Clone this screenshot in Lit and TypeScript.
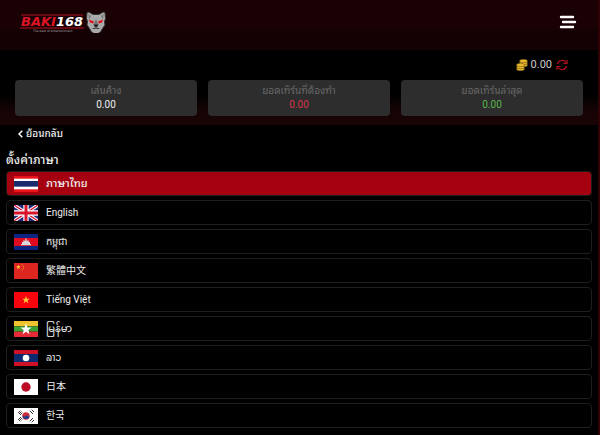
import { LitElement, html, css, svg } from "lit";
import { customElement, state } from "lit/decorators.js";
import { classMap } from "lit/directives/class-map.js";

const STAR = "M0-10 2.4-3.1 9.5-3.1 3.8 1.2 5.9 8.1 0 3.9-5.9 8.1-3.8 1.2-9.5-3.1-2.4-3.1z";

const star = (x: number, y: number, s: number, fill: string) =>
  svg`<path d=${STAR} fill=${fill} transform="translate(${x} ${y}) scale(${s})"/>`;

const flags: Record<string, unknown> = {
  th: svg`<path fill="#e8141c" d="M0 0h72v48H0z"/><path fill="#fff" d="M0 8h72v32H0z"/><path fill="#1c2a6e" d="M0 15h72v17H0z"/>`,
  en: svg`<path fill="#1a2a78" d="M0 0h72v48H0z"/><path stroke="#fff" stroke-width="10" d="M0 0l72 48M72 0L0 48"/><path stroke="#d8142c" stroke-width="4" d="M0 0l72 48M72 0L0 48"/><path stroke="#fff" stroke-width="16" d="M36 0v48M0 24h72"/><path stroke="#d8142c" stroke-width="9" d="M36 0v48M0 24h72"/>`,
  km: svg`<path fill="#0c2580" d="M0 0h72v48H0z"/><path fill="#e00a20" d="M0 12h72v24H0z"/><path fill="#d8d8d8" d="M21 34v-4h3v-6h4v-4l2-3 2 4h2v-5l2-4 2 4v5h2l2-4 2 3v4h4v6h3v4z"/>`,
  zh: svg`<path fill="#de2620" d="M0 0h72v48H0z"/>${star(13, 12, 0.7, "#ffd53a")}${star(24, 5, 0.22, "#ffd53a")}${star(28, 10, 0.22, "#ffd53a")}${star(28, 16, 0.22, "#ffd53a")}${star(24, 21, 0.22, "#ffd53a")}`,
  vi: svg`<path fill="#f7050c" d="M0 0h72v48H0z"/>${star(36, 24, 1.2, "#ffc83a")}`,
  my: svg`<path fill="#efc42e" d="M0 0h72v16H0z"/><path fill="#3ba233" d="M0 16h72v16H0z"/><path fill="#e62b36" d="M0 32h72v16H0z"/>${star(36, 25, 1.8, "#fff")}`,
  lo: svg`<path fill="#ce1126" d="M0 0h72v48H0z"/><path fill="#0c2a70" d="M0 12h72v24H0z"/><circle cx="36" cy="24" r="10" fill="#fff"/>`,
  ja: svg`<path fill="#fff" d="M0 0h72v48H0z"/><circle cx="36" cy="24" r="14" fill="#bd0a24"/>`,
  ko: svg`<path fill="#fff" d="M0 0h72v48H0z"/><circle cx="36" cy="24" r="11" fill="#cd2e3a"/><path fill="#173f91" d="M26 20a6 6 0 0 0 10 4 6 6 0 0 1 10 4 11 11 0 0 1-20-8z"/><g stroke="#222" stroke-width="2.6"><path d="M12 15l7-7M15 18l7-7M18 21l7-7M47 8l7 7M50 11l7 7M53 5l7 7M12 33l7 7M15 30l7 7M18 27l7 7M47 40l7-7M50 37l7-7M53 43l7-7"/></g>`,
};

interface Language {
  code: string;
  name: string;
}

const languages: Language[] = [
  { code: "th", name: "ภาษาไทย" },
  { code: "en", name: "English" },
  { code: "km", name: "កម្ពុជា" },
  { code: "zh", name: "繁體中文" },
  { code: "vi", name: "Tiếng Việt" },
  { code: "my", name: "မြန်မာ" },
  { code: "lo", name: "ລາວ" },
  { code: "ja", name: "日本" },
  { code: "ko", name: "한국" },
];

const stats = [
  { label: "เล่นค้าง", value: "0.00", tone: "plain" },
  { label: "ยอดเทิร์นที่ต้องทำ", value: "0.00", tone: "due" },
  { label: "ยอดเทิร์นล่าสุด", value: "0.00", tone: "latest" },
];

@customElement("app-root")
export class AppRoot extends LitElement {
  @state() private selected = "th";

  static styles = css`
    :host {
      display: block;
      box-sizing: border-box;
      min-height: 100vh;
      background: #000;
      border-right: 2px solid #300205;
      color: #eee;
      font-family: Roboto, "Noto Sans Thai Looped", "Noto Sans Thai", "Noto Sans Myanmar", "Noto Sans Lao",
        "Noto Sans", "Noto Sans CJK TC", "Noto Sans CJK KR", sans-serif;
      font-size: 10px;
      line-height: 14px;
    }
    * {
      box-sizing: border-box;
    }
    button {
      font: inherit;
      color: inherit;
      background: none;
      border: 0;
      padding: 0;
      cursor: pointer;
    }
    svg {
      display: block;
    }
    header {
      display: flex;
      align-items: center;
      justify-content: space-between;
      height: 50px;
      padding: 0 21px 6px 20px;
      background: linear-gradient(#1a0204 60%, #130103 60%);
    }
    .brand {
      display: flex;
      align-items: center;
      text-decoration: none;
    }
    .wordmark text {
      font-family: "DejaVu Sans", sans-serif;
      font-style: italic;
      font-weight: 700;
      font-size: 13px;
    }
    .wordmark .tagline {
      font-weight: 400;
      font-size: 3px;
    }
    .summary {
      padding: 6px 15px 9px;
      background: linear-gradient(#000 60%, #190405 85%);
    }
    .balance {
      display: flex;
      align-items: center;
      justify-content: flex-end;
      gap: 3px;
      height: 17px;
      margin-bottom: 7px;
      padding-right: 15px;
      font-size: 11px;
      color: #ccc;
    }
    .refresh {
      margin-left: 1px;
    }
    .stats {
      display: grid;
      grid-template-columns: repeat(3, 1fr);
      gap: 11px;
      margin: 0;
    }
    .stat {
      height: 36px;
      padding: 4px 0;
      border-radius: 4px;
      background: #2d2d2d;
      text-align: center;
    }
    .stat dt {
      color: #686868;
    }
    .stat dd {
      margin: 0;
      color: #eee;
    }
    .stat .due {
      color: #d5374a;
    }
    .stat .latest {
      color: #59b94c;
    }
    main {
      padding: 2px 6px 6px;
    }
    .back {
      display: flex;
      align-items: center;
      gap: 3px;
      height: 14px;
      margin-left: 12px;
      font-weight: 500;
    }
    h1 {
      margin: 11px 0 3px;
      font-size: 12px;
      line-height: 16px;
      font-weight: 500;
    }
    .list {
      display: grid;
      gap: 4px;
      margin: 0;
      padding: 0;
      list-style: none;
    }
    .language {
      display: flex;
      align-items: center;
      gap: 8px;
      width: 100%;
      height: 25px;
      padding: 0 7px;
      border: 1px solid #1e1e1e;
      border-radius: 4px;
      text-align: left;
    }
    .language.active {
      background: #a5000f;
    }
    .language:lang(th) {
      font-size: 11px;
      font-weight: 500;
    }
    .language svg {
      flex: none;
    }
  `;

  private renderLogo() {
    return html`
      <svg class="wordmark" width="66" height="24" viewBox="0 0 66 24" role="img" aria-label="BAKI168">
        <path d="M1 5h62M0 18h64" stroke="#b4101c" stroke-width="1" />
        <text x="1" y="16" fill="#dc1424">BAKI<tspan fill="#fff">168</tspan></text>
        <text class="tagline" x="13" y="22" fill="#aaa">The best of entertainment</text>
      </svg>
      <svg width="20" height="22" viewBox="0 0 40 44" aria-hidden="true">
        <path fill="#aaa" stroke="#333" stroke-width="2" d="M2 3l4-1 6 4 4 1h8l4-1 6-4 4 1 1 12-2 6 1 7-5 7-4 7-5 3h-8l-5-3-4-7-5-7 1-7-2-6z" />
        <path fill="#777" d="M5 6l5 4-4 7zM35 6l-5 4 4 7zM15 26l5-10 5 10-1 5h-8z" />
        <path fill="#e30e18" d="M6 17l10 4-2 4-6-2zM34 17l-10 4 2 4 6-2z" />
        <path fill="#222" d="M15 27h10l-3 5h-4zM12 35l8-2 8 2-4 1-4-1-4 1z" />
      </svg>
    `;
  }

  render() {
    return html`
      <header>
        <a class="brand" href="#">${this.renderLogo()}</a>
        <button type="button" aria-label="Menu">
          <svg width="18" height="14" viewBox="0 0 18 14" fill="none" stroke="#fff" stroke-width="2.4" stroke-linecap="round">
            <path d="M2 2h12M4 7h12M2 12h12" />
          </svg>
        </button>
      </header>
      <section class="summary">
        <div class="balance">
          <svg width="12" height="12" viewBox="0 0 24 24" aria-hidden="true">
            <g fill="#eab92d" stroke="#5e4410" stroke-width="1">
              <ellipse cx="15" cy="12" rx="8" ry="3.5" /><ellipse cx="15" cy="8" rx="8" ry="3.5" /><ellipse cx="15" cy="4" rx="8" ry="3.5" />
              <ellipse cx="9" cy="20" rx="8" ry="3.5" /><ellipse cx="9" cy="16" rx="8" ry="3.5" /><ellipse cx="9" cy="12" rx="8" ry="3.5" />
            </g>
          </svg>
          <span>0.00</span>
          <button class="refresh" type="button" aria-label="Refresh">
            <svg width="12" height="12" viewBox="0 0 24 24" fill="none" stroke="#b3101d" stroke-width="2.4">
              <path d="M3 10a9.5 9.5 0 0 1 17-3M22 2v7h-7M21 14a9.5 9.5 0 0 1-17 3M2 22v-7h7" />
            </svg>
          </button>
        </div>
        <dl class="stats">
          ${stats.map((s) => html`<div class="stat"><dt>${s.label}</dt><dd class=${s.tone}>${s.value}</dd></div>`)}
        </dl>
      </section>
      <main>
        <button class="back" type="button">
          <svg width="5" height="8" viewBox="0 0 5 8" fill="none" stroke="#fff" stroke-width="1.5"><path d="M4.3 .7L1 4l3.3 3.3" /></svg>
          ย้อนกลับ
        </button>
        <h1>ตั้งค่าภาษา</h1>
        <ul class="list">
          ${languages.map(
            (l) => html`<li>
              <button
                type="button"
                lang=${l.code}
                class=${classMap({ language: true, active: l.code === this.selected })}
                aria-pressed=${l.code === this.selected}
                @click=${() => (this.selected = l.code)}
              >
                <svg width="24" height="16" viewBox="0 0 72 48" aria-hidden="true">${flags[l.code]}</svg>
                <span>${l.name}</span>
              </button>
            </li>`
          )}
        </ul>
      </main>
    `;
  }
}
